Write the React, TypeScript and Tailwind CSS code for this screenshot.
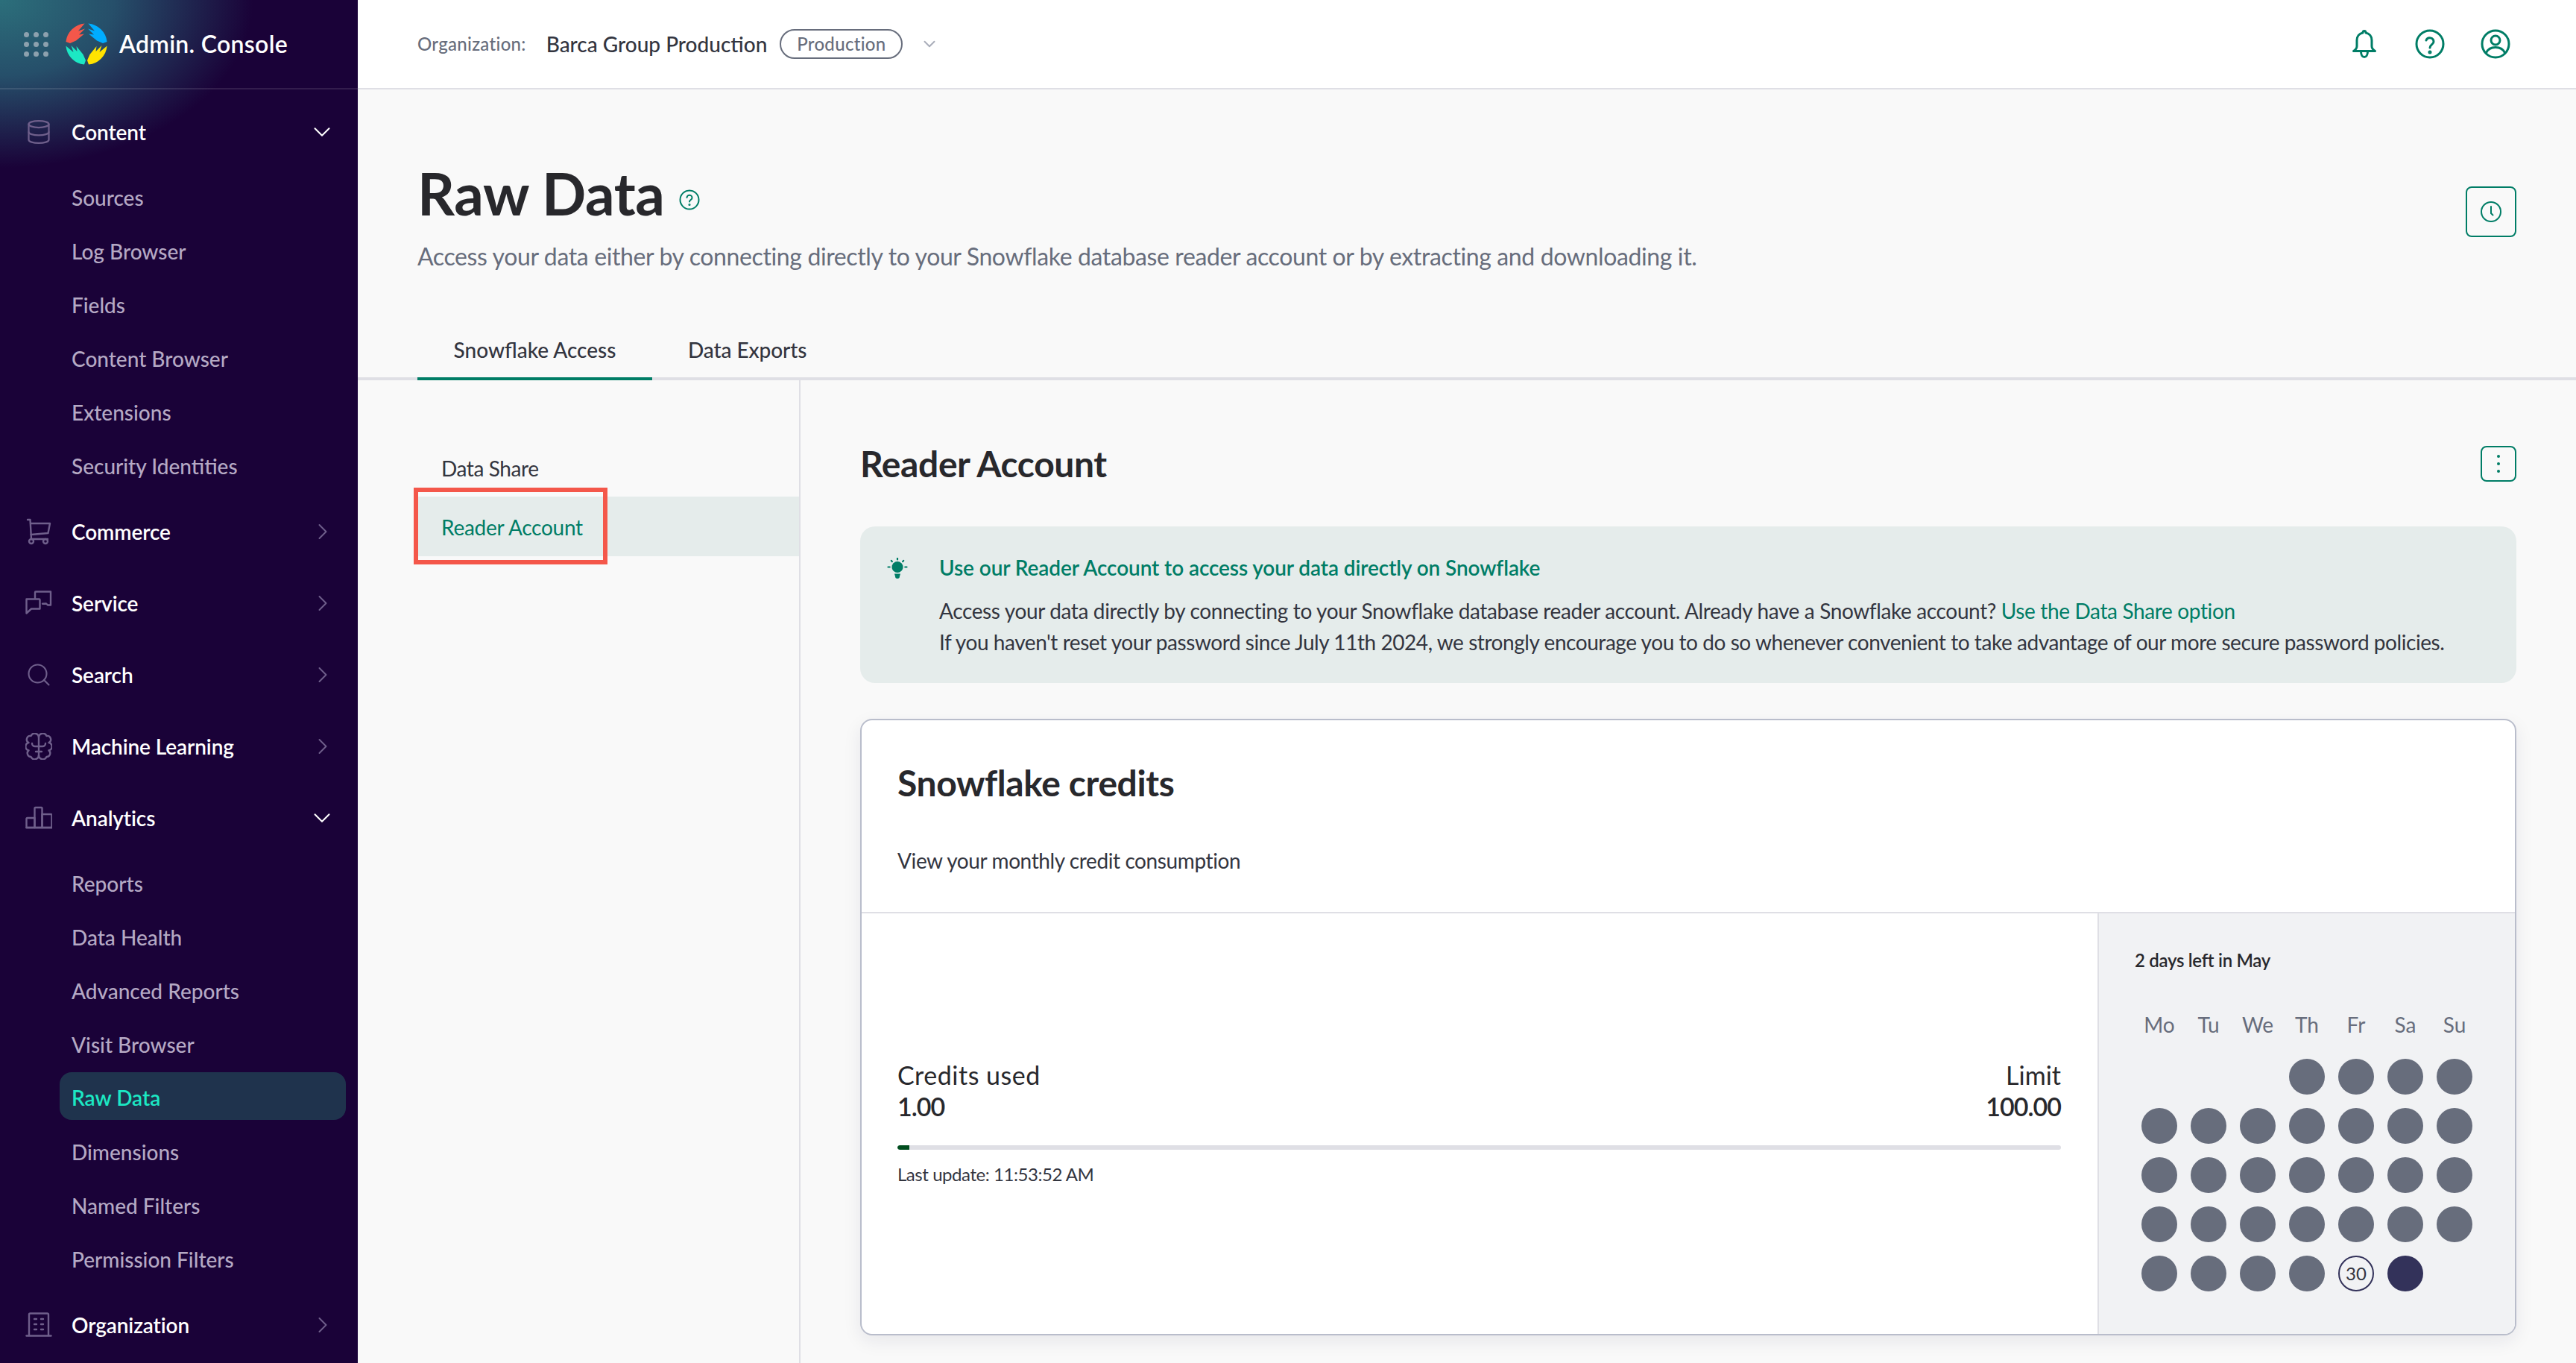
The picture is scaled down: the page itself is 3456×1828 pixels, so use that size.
import React from "react";
import { ChevronDown, ChevronRight, Database, Search } from "lucide-react";

const ICON = "text-[#6f5f8b]";

function CartIcon() {
  return (
    <svg width="36" height="36" viewBox="0 0 36 36" fill="none" stroke="currentColor" strokeWidth="2.4" strokeLinecap="round" strokeLinejoin="round" className={ICON}>
      <path d="M3 2h3.500l1.500 26" />
      <path d="M7 7h26l-2.500 13-23 2" />
      <path d="M8 28h22" />
      <circle cx="8" cy="31" r="3" />
      <circle cx="27" cy="31" r="3" />
    </svg>
  );
}
function ChatIcon() {
  return (
    <svg width="36" height="36" viewBox="0 0 36 36" fill="none" stroke="currentColor" strokeWidth="2.4" strokeLinecap="round" strokeLinejoin="round" className={ICON}>
      <path d="M13 13V3.500a1 1 0 0 1 1-1h20v18h-4l-2-2-5 .2" />
      <path d="M1.500 12.500h17a1 1 0 0 1 1 1v12H8l-6.500 6z" fill="#1a0238" />
    </svg>
  );
}
function BrainIcon() {
  return (
    <svg width="36" height="36" viewBox="0 0 36 36" fill="none" stroke="currentColor" strokeWidth="2.4" strokeLinecap="round" strokeLinejoin="round" className={ICON}>
      <path d="M18 5v27" />
      <path d="M18 5.500a5.500 5.500 0 0 0-10.500-1.500 4.800 4.800 0 0 0-3 9 5.400 5.400 0 0 0 0 10.500 4.800 4.800 0 0 0 3 8.500 5.500 5.500 0 0 0 10.500-1.500" />
      <path d="M18 5.500a5.500 5.500 0 0 1 10.500-1.500 4.800 4.800 0 0 1 3 9 5.400 5.400 0 0 1 0 10.500 4.800 4.800 0 0 1-3 8.500 5.500 5.500 0 0 1-10.500-1.500" />
      <path d="M18 18h-5a4 4 0 0 1-4-4M18 18h5a4 4 0 0 0 4-4M18 25h-4M18 25h4" />
    </svg>
  );
}
function BarsIcon() {
  return (
    <svg width="36" height="36" viewBox="0 0 36 36" fill="none" stroke="currentColor" strokeWidth="2.4" strokeLinecap="round" strokeLinejoin="round" className={ICON}>
      <path d="M1.500 31V19a1 1 0 0 1 1-1h10v13z" />
      <path d="M12.500 31V5a1 1 0 0 1 1-1h8a1 1 0 0 1 1 1v26z" />
      <path d="M22.500 31V13h12a1 1 0 0 1 1 1v17z" />
      <path d="M1.500 31h34" />
    </svg>
  );
}
function BuildingIcon() {
  return (
    <svg width="36" height="36" viewBox="0 0 36 36" fill="none" stroke="currentColor" strokeWidth="2.4" strokeLinecap="round" strokeLinejoin="round" className={ICON}>
      <path d="M5 32V4a1.500 1.500 0 0 1 1.500-1.500h23A1.500 1.500 0 0 1 31 4v28" />
      <path d="M1.500 32.500h33" />
      <path d="M12 10h3M21 10h3M12 17h3M21 17h3M12 24h3M21 24h3" />
    </svg>
  );
}

function Logo() {
  const hand = "M0.4 25 A27.800 27.800 0 0 1 25.600 0.4 L17 10.500 L26 7.500 L18 15.500 L25 14.500 L14 23.500 L6 27 Z";
  return (
    <svg width="56" height="56" viewBox="0 0 56 56" className="shrink-0">
      <path d={hand} fill="#f4574a" />
      <path d={hand} fill="#00adff" transform="translate(56 0) scale(-1 1)" />
      <path d={hand} fill="#1ce8c4" transform="rotate(-90 28 28)" />
      <path d={hand} fill="#ffe300" transform="translate(56 0) scale(-1 1) rotate(-90 28 28)" />
    </svg>
  );
}

function GridDots() {
  return (
    <div className="grid grid-cols-3 gap-[6px] w-[33px] shrink-0">
      {Array.from({ length: 9 }).map((_, i) => (
        <span key={i} className="w-[7px] h-[7px] rounded-full bg-[#8da1ae]" />
      ))}
    </div>
  );
}

function TopItem({ icon, label, open }: { icon: React.ReactNode; label: string; open?: boolean }) {
  return (
    <div className="h-[96px] flex items-center pl-[34px] pr-[29px]">
      <span className="w-[36px] h-[36px] flex items-center justify-center shrink-0">{icon}</span>
      <span className="ml-[26px] flex-1 text-[28px] font-semibold text-white tracking-[-0.1px]">{label}</span>
      {open ? (
        <ChevronDown size={38} strokeWidth={1.300} className="text-white" />
      ) : (
        <ChevronRight size={36} strokeWidth={1.300} className="text-[#6f5f8b]" />
      )}
    </div>
  );
}

function SubItem({ label, active }: { label: string; active?: boolean }) {
  if (active) {
    return (
      <div className="h-[72px] pl-[80px] pr-[16px] pt-[1px] pb-[7px]">
        <div className="h-[64px] pt-[4px] px-[16px] flex items-center rounded-[16px] bg-[#1f334d] text-[28px] font-semibold text-[#1ce8c4]">{label}</div>
      </div>
    );
  }
  return (
    <div className="h-[72px] pl-[96px] pr-[32px] flex items-center text-[28px] font-medium text-[#b5a9c4]">{label}</div>
  );
}

function Sidebar() {
  return (
    <aside className="w-[480px] h-[1828px] shrink-0 bg-[radial-gradient(ellipse_340px_225px_at_0_0,#2c6f7b_0%,#264f6a_45%,#1a0238_100%)] bg-[#1a0238] flex flex-col">
      <div className="h-[120px] flex items-center pl-[32px] border-b-2 border-[#ffffff1c]">
        <GridDots />
        <span className="ml-[23px]"><Logo /></span>
        <span className="ml-[16px] text-[32px] font-semibold text-white tracking-[0.3px]">Admin. Console</span>
      </div>
      <nav className="pt-[9px] flex flex-col">
        <TopItem icon={<Database size={40} strokeWidth={1.500} className={ICON} />} label="Content" open />
        <div className="py-[4px]">
          {["Sources", "Log Browser", "Fields", "Content Browser", "Extensions", "Security Identities"].map((s) => (
            <SubItem key={s} label={s} />
          ))}
        </div>
        <TopItem icon={<CartIcon />} label="Commerce" />
        <TopItem icon={<ChatIcon />} label="Service" />
        <TopItem icon={<Search size={44} strokeWidth={1.400} className={ICON} />} label="Search" />
        <TopItem icon={<BrainIcon />} label="Machine Learning" />
        <TopItem icon={<BarsIcon />} label="Analytics" open />
        <div className="py-[4px]">
          <SubItem label="Reports" />
          <SubItem label="Data Health" />
          <SubItem label="Advanced Reports" />
          <SubItem label="Visit Browser" />
          <SubItem label="Raw Data" active />
          <SubItem label="Dimensions" />
          <SubItem label="Named Filters" />
          <SubItem label="Permission Filters" />
        </div>
        <TopItem icon={<BuildingIcon />} label="Organization" />
      </nav>
    </aside>
  );
}

function TeaIcon({ children }: { children: React.ReactNode }) {
  return (
    <svg width="40" height="40" viewBox="0 0 40 40" fill="none" stroke="#007d66" strokeWidth="3" strokeLinecap="round" strokeLinejoin="round">
      {children}
    </svg>
  );
}

function Header() {
  return (
    <header className="h-[120px] shrink-0 bg-white border-b-2 border-[#dfdfe5] flex items-center pl-[80px] pr-[88px]">
      <span className="text-[24px] font-medium text-[#676d7c] tracking-[0.3px]">Organization:</span>
      <span className="ml-[27px] text-[28px] font-medium text-[#33353f]">Barca Group Production</span>
      <span className="ml-[17px] h-[40px] w-[165px] rounded-full border-2 border-[#676d7c] flex items-center justify-center text-[24px] font-medium text-[#676d7c] tracking-[0.3px]">Production</span>
      <ChevronDown size={26} strokeWidth={1.800} className="ml-[23px] text-[#a9adb9]" />
      <div className="ml-auto flex items-center gap-[48px]">
        <TeaIcon>
          <path d="M20 2.500c-1.500 0-2 1-2 2.500-5 1-8 5-8 10v8c0 3-2 5-4.500 6.500h29C32 28 30 26 30 23v-8c0-5-3-9-8-10 0-1.500-.5-2.500-2-2.500z" />
          <path d="M15.500 30c0 4.500 2 7.500 4.500 7.500s4.500-3 4.500-7.500" />
        </TeaIcon>
        <TeaIcon>
          <circle cx="20" cy="20" r="18" />
          <path d="M15 15a5.200 5.200 0 0 1 10 2c0 3.500-5 4-5 8" />
          <circle cx="20" cy="31" r="1" fill="#007d66" />
        </TeaIcon>
        <TeaIcon>
          <circle cx="20" cy="20" r="18" />
          <circle cx="20" cy="15" r="6" />
          <path d="M7.500 32c2.500-6 7-7.500 12.500-7.500S30 26 32.500 32" />
        </TeaIcon>
      </div>
    </header>
  );
}

function PageHead() {
  return (
    <div className="shrink-0 h-[390px] flex flex-col">
      <div className="flex pl-[80px] pr-[80px]">
        <div className="flex-1 pt-[95px]">
          <div className="h-[88px] flex items-center">
            <h1 className="text-[78px] leading-[88px] font-bold text-[#28282c] tracking-[-0.4px]">Raw Data</h1>
            <svg width="28" height="28" viewBox="0 0 28 28" fill="none" stroke="#007d66" strokeWidth="2" strokeLinecap="round" className="ml-[19px] mt-[18px]">
              <circle cx="14" cy="14" r="12.500" />
              <path d="M10.500 11a3.500 3.500 0 0 1 7 .5c0 2.500-3.500 2.500-3.500 5" />
              <circle cx="14" cy="20.500" r=".6" fill="#007d66" />
            </svg>
          </div>
          <p className="mt-[19px] h-[44px] leading-[44px] text-[32px] text-[#676d7c] tracking-[-0.38px]">
            Access your data either by connecting directly to your Snowflake database reader account or by extracting and downloading it.
          </p>
        </div>
        <button className="mt-[130px] w-[68px] h-[68px] rounded-[8px] border-2 border-[#007d66] flex items-center justify-center shrink-0">
          <svg width="28" height="28" viewBox="0 0 28 28" fill="none" stroke="#007d66" strokeWidth="2" strokeLinecap="round">
            <circle cx="14" cy="14" r="13" />
            <path d="M14 7v9l2.500 2.500" />
          </svg>
        </button>
      </div>
      <div className="mt-auto h-[80px] border-b-4 border-[#dfdfe5] pl-[80px] flex">
        <div className="w-[315px] h-[80px] pt-[2px] border-b-4 border-[#007d66] flex items-center justify-center text-[28px] font-medium text-[#33353f]">Snowflake Access</div>
        <div className="ml-[48px] h-[76px] pt-[2px] flex items-center text-[28px] font-medium text-[#33353f] tracking-[-0.1px]">Data Exports</div>
      </div>
    </div>
  );
}

function SideTabs() {
  return (
    <div className="w-[594px] shrink-0 border-r-2 border-[#dfdfe5] pl-[80px] pt-[80px] h-[1318px]">
      <div className="h-[76px] pb-[1px] pl-[32px] flex items-center text-[28px] text-[#33353f] tracking-[-0.4px]">Data Share</div>
      <div className="relative h-[80px] pl-[32px] pt-[2px] flex items-center bg-[#e5eceb] text-[28px] text-[#007d66] tracking-[-0.25px]">
        Reader Account
        <div className="absolute left-[-5px] top-[-12px] w-[260px] h-[103px] border-[6px] border-[#f4574a]" />
      </div>
    </div>
  );
}

function Bulb() {
  return (
    <svg width="28" height="28" viewBox="0 0 28 28" className="shrink-0" fill="#007d66" stroke="#007d66" strokeLinecap="round">
      <circle cx="14" cy="12.500" r="7.500" stroke="none" />
      <path d="M10 21.500h8l-1 3.500a3 3 0 0 1-6 0z" stroke="none" />
      <path d="M14 .8v1.600M5.800 3.800l1 1.400M22.200 3.800l-1 1.400M1.500 12.500h2.200M24.300 12.500h2.200" strokeWidth="2.200" fill="none" />
    </svg>
  );
}

function Calendar() {
  const blanks = [0, 1, 2];
  const days = Array.from({ length: 29 }, (_, i) => i + 1);
  return (
    <div className="w-[560px] shrink-0 bg-[#f1f2f4] border-l-2 border-[#dfdfe5] pl-[48px] pt-[46px] rounded-br-[14px]">
      <div className="h-[34px] flex items-center text-[24px] font-semibold text-[#28282c] tracking-[-0.3px]">2 days left in May</div>
      <div className="mt-[48px] grid grid-cols-[repeat(7,66px)] h-[40px] text-[28px] text-[#676d7c]">
        {["Mo", "Tu", "We", "Th", "Fr", "Sa", "Su"].map((d) => (
          <div key={d} className="flex items-center justify-center">{d}</div>
        ))}
      </div>
      <div className="mt-[18px] grid grid-cols-[repeat(7,66px)] auto-rows-[66px]">
        {blanks.map((b) => <div key={b} />)}
        {days.map((d) => (
          <div key={d} className="flex items-center justify-center">
            <span className="w-[48px] h-[48px] rounded-full bg-[#676d7c]" />
          </div>
        ))}
        <div className="flex items-center justify-center">
          <span className="w-[48px] h-[48px] rounded-full border-2 border-[#33325a] flex items-center justify-center text-[24px] text-[#33353f]">30</span>
        </div>
        <div className="flex items-center justify-center">
          <span className="w-[48px] h-[48px] rounded-full bg-[#33325a]" />
        </div>
      </div>
    </div>
  );
}

function Card() {
  return (
    <div className="mt-[48px] h-[827px] rounded-[16px] border-2 border-[#b9bdcb] bg-white shadow-[0_8px_24px_rgba(30,30,60,0.08)] flex flex-col">
      <div className="h-[259px] shrink-0 border-b-2 border-[#dfdfe5] pl-[48px] pt-[58px]">
        <h3 className="h-[52px] leading-[52px] text-[48px] font-bold text-[#28282c] tracking-[-0.4px]">Snowflake credits</h3>
        <p className="mt-[60px] h-[36px] leading-[36px] text-[28px] text-[#33353f] tracking-[-0.4px]">View your monthly credit consumption</p>
      </div>
      <div className="flex-1 flex min-h-0">
        <div className="flex-1 pl-[48px] pr-[49px] pb-[3px] flex flex-col justify-center">
          <div className="flex justify-between h-[44px] items-center text-[34px] text-[#28282c]">
            <span className="tracking-[0.5px]">Credits used</span><span>Limit</span>
          </div>
          <div className="flex justify-between h-[40px] items-center text-[34px] font-semibold text-[#28282c] tracking-[-1px]">
            <span>1.00</span><span>100.00</span>
          </div>
          <div className="mt-[33px] h-[6px] rounded-full bg-[#dfdfe5] overflow-hidden">
            <div className="w-[16px] h-full bg-[#004d1e] rounded-l-full" />
          </div>
          <div className="mt-[16px] h-[34px] flex items-center text-[24px] text-[#33353f] tracking-[-0.45px]">Last update: 11:53:52 AM</div>
        </div>
        <Calendar />
      </div>
    </div>
  );
}

function ReaderPanel() {
  return (
    <div className="flex-1 pl-[80px] pr-[80px] pt-[88px] min-w-0">
      <div className="flex items-center justify-between h-[48px]">
        <h2 className="text-[48px] font-bold text-[#28282c] tracking-[-0.4px]">Reader Account</h2>
        <button className="w-[48px] h-[48px] rounded-[8px] border-2 border-[#007d66] flex flex-col items-center justify-center gap-[6px]">
          <span className="w-[4px] h-[4px] rounded-full bg-[#007d66]" />
          <span className="w-[4px] h-[4px] rounded-full bg-[#007d66]" />
          <span className="w-[4px] h-[4px] rounded-full bg-[#007d66]" />
        </button>
      </div>
      <div className="mt-[60px] h-[210px] rounded-[20px] bg-[#e5eceb] flex pl-[36px] pt-[34px]">
        <span className="mt-[8px]"><Bulb /></span>
        <div className="ml-[42px]">
          <div className="h-[42px] leading-[42px] text-[28px] font-semibold text-[#007d66] tracking-[-0.1px]">Use our Reader Account to access your data directly on Snowflake</div>
          <div className="mt-[16px] h-[42px] leading-[42px] text-[28px] text-[#33353f] tracking-[-0.37px]">
            Access your data directly by connecting to your Snowflake database reader account. Already have a Snowflake account? <span className="text-[#007d66]">Use the Data Share option</span>
          </div>
          <div className="h-[42px] leading-[42px] text-[28px] text-[#33353f] tracking-[-0.44px]">
            If you haven't reset your password since July 11th 2024, we strongly encourage you to do so whenever convenient to take advantage of our more secure password policies.
          </div>
        </div>
      </div>
      <Card />
    </div>
  );
}

export default function App() {
  return (
    <div className="w-[3456px] h-[1828px] overflow-hidden flex bg-[#f9f9f9] font-['Lato',sans-serif]">
      <Sidebar />
      <main className="flex-1 flex flex-col min-w-0">
        <Header />
        <PageHead />
        <div className="flex flex-1 min-h-0">
          <SideTabs />
          <ReaderPanel />
        </div>
      </main>
    </div>
  );
}
